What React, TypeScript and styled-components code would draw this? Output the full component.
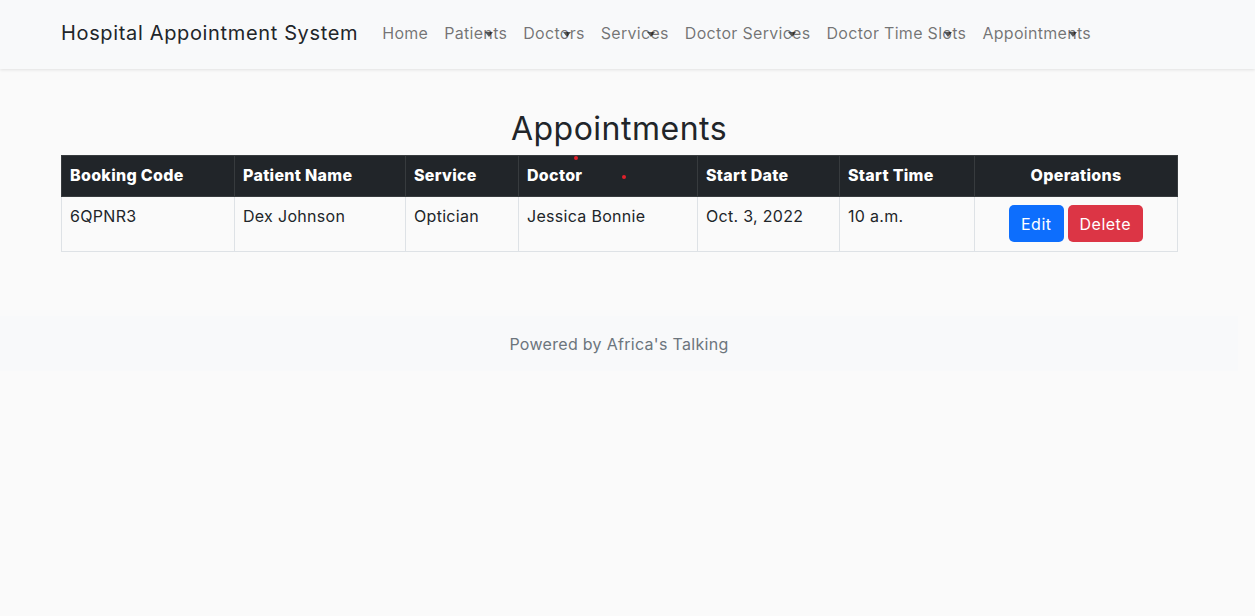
import styled, { createGlobalStyle } from "styled-components";

const GlobalStyle = createGlobalStyle`
  html, body {
    margin: 0;
    padding: 0;
    background: #fafafa;
    font-family: Inter, "Noto Sans", sans-serif;
    color: #212529;
  }
  * { box-sizing: border-box; }
`;

const Page = styled.div`
  padding-right: 17px;
  min-height: 616px;
`;

const NavBar = styled.nav`
  background: #f8f9fa;
  box-shadow: 0 1px 3px rgba(0, 0, 0, 0.1);
  margin-right: -17px;
  padding-right: 17px;
`;

const Container = styled.div`
  width: 1116px;
  margin: 0 auto;
`;

const NavInner = styled(Container)`
  height: 69px;
  display: flex;
  align-items: center;
  padding-bottom: 3px;
`;

const Brand = styled.a`
  font-size: 20px;
  letter-spacing: 0.65px;
  color: #212529;
  margin-right: 16px;
  white-space: nowrap;
`;

const NavList = styled.ul`
  display: flex;
  list-style: none;
  margin: 0;
  padding: 0;
`;

const NavLink = styled.li<{ $drop?: boolean }>`
  position: relative;
  padding: 8px;
  font-size: 16px;
  letter-spacing: 0.3px;
  color: rgba(0, 0, 0, 0.55);
  white-space: nowrap;

  ${(p) =>
    p.$drop &&
    `
    &::after {
      content: "";
      position: absolute;
      right: 22px;
      top: 17px;
      border-top: 5px solid rgba(0, 0, 0, 0.65);
      border-left: 4px solid transparent;
      border-right: 4px solid transparent;
    }
  `}
`;

const Main = styled(Container)`
  position: relative;
  padding-top: 41px;
`;

const Title = styled.h2`
  margin: 0 0 7px;
  text-align: center;
  font-size: 32px;
  font-weight: 400;
  letter-spacing: 0.5px;
  line-height: 1.2;
`;

const Table = styled.table`
  width: 100%;
  border-collapse: collapse;
  table-layout: fixed;
  font-size: 16px;
`;

const Th = styled.th<{ $w: number; $center?: boolean }>`
  width: ${(p) => p.$w}px;
  background: #212529;
  color: #fff;
  font-weight: 800;
  letter-spacing: 0.3px;
  text-align: ${(p) => (p.$center ? "center" : "left")};
  padding: 7px 8px 9px;
  height: 41px;
  border: 1px solid #373b3e;
`;

const Td = styled.td<{ $center?: boolean }>`
  padding: 9px 8px 8px;
  height: 55px;
  vertical-align: top;
  letter-spacing: 0.3px;
  text-align: ${(p) => (p.$center ? "center" : "left")};
  border: 1px solid #dee2e6;
  color: #212529;
`;

const OpsCell = styled(Td)`
  padding-top: 8px;
`;

const Btn = styled.button<{ $variant: "primary" | "danger" }>`
  font-family: inherit;
  font-size: 16px;
  letter-spacing: 0.5px;
  line-height: 1.5;
  padding: 7px 12px 6px;
  border: none;
  border-radius: 5px;
  color: #fff;
  background: ${(p) => (p.$variant === "primary" ? "#0d6efd" : "#dc3545")};
  margin: 0 2px;
`;

const Dot = styled.span<{ $x: number; $y: number }>`
  position: absolute;
  left: ${(p) => p.$x}px;
  top: ${(p) => p.$y}px;
  width: 4px;
  height: 4px;
  border-radius: 50%;
  background: #e0202a;
`;

const Footer = styled.footer`
  margin-top: 64px;
  background: #f8f9fa;
  height: 55px;
  display: flex;
  align-items: center;
  justify-content: center;
  color: #6c757d;
  font-size: 16px;
  letter-spacing: 0.3px;
`;

const links: { label: string; drop?: boolean }[] = [
  { label: "Home" },
  { label: "Patients", drop: true },
  { label: "Doctors", drop: true },
  { label: "Services", drop: true },
  { label: "Doctor Services", drop: true },
  { label: "Doctor Time Slots", drop: true },
  { label: "Appointments", drop: true },
];

export default function App() {
  return (
    <Page>
      <GlobalStyle />
      <NavBar>
        <NavInner>
          <Brand>Hospital Appointment System</Brand>
          <NavList>
            {links.map((l) => (
              <NavLink key={l.label} $drop={l.drop}>
                {l.label}
              </NavLink>
            ))}
          </NavList>
        </NavInner>
      </NavBar>

      <Main>
        <Title>Appointments</Title>
        <Table>
          <thead>
            <tr>
              <Th $w={173}>Booking Code</Th>
              <Th $w={171}>Patient Name</Th>
              <Th $w={113}>Service</Th>
              <Th $w={179}>Doctor</Th>
              <Th $w={142}>Start Date</Th>
              <Th $w={135}>Start Time</Th>
              <Th $w={203} $center>
                Operations
              </Th>
            </tr>
          </thead>
          <tbody>
            <tr>
              <Td>6QPNR3</Td>
              <Td>Dex Johnson</Td>
              <Td>Optician</Td>
              <Td>Jessica Bonnie</Td>
              <Td>Oct. 3, 2022</Td>
              <Td>10 a.m.</Td>
              <OpsCell $center>
                <Btn $variant="primary">Edit</Btn>
                <Btn $variant="danger">Delete</Btn>
              </OpsCell>
            </tr>
          </tbody>
        </Table>
        <Dot $x={513} $y={87} />
        <Dot $x={561} $y={106} />
      </Main>

      <Footer>Powered by Africa's Talking</Footer>
    </Page>
  );
}
